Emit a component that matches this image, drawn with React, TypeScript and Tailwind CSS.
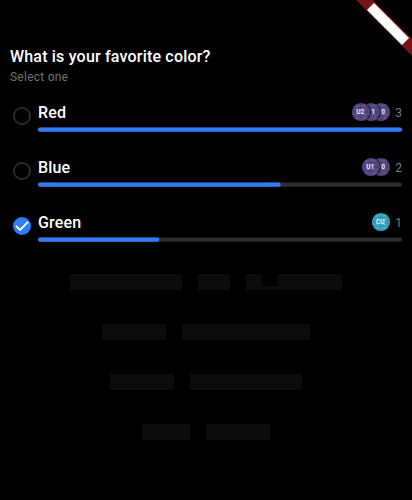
type Voter = { label: string; kind: 'user' | 'current' };
type Option = { name: string; votes: number; checked: boolean; voters: Voter[] };

const OPTIONS: Option[] = [
  {
    name: 'Red', votes: 3, checked: false,
    voters: [{ label: 'U2', kind: 'user' }, { label: '1', kind: 'user' }, { label: '0', kind: 'user' }],
  },
  {
    name: 'Blue', votes: 2, checked: false,
    voters: [{ label: 'U1', kind: 'user' }, { label: '0', kind: 'user' }],
  },
  { name: 'Green', votes: 1, checked: true, voters: [{ label: 'CU', kind: 'current' }] },
];

const WORDS: number[][] = [[7, 2, 6], [4, 8], [4, 7], [3, 4]];

const LAYERS = ['relative z-30', 'relative z-20', 'relative z-10'];

function Avatar({ label, kind, index }: Voter & { index: number }) {
  const user = kind === 'user';
  const base = user ? '#52467f' : '#35a2ba';
  const light = user ? '#786c96' : '#69c7d6';
  const dark = user ? '#3f3474' : '#197d96';
  return (
    <svg viewBox="0 0 20 20" className={`size-5 shrink-0 ${LAYERS[index]}`}>
      <circle cx="10" cy="10" r="9.7" fill="#000" />
      <circle cx="10" cy="10" r="9.1" fill={base} />
      <g fill="none" strokeWidth=".6">
        <path d="M4 4 16 3M2 7h16M1.5 12.5 18 13M4 16h12M6 3v14M13 2l1 15" stroke={light} opacity=".6" />
        <path d="M3 5.5h14M1.5 10h17M3 14.5h14M9.5 1.5v17M3.7 5v10M16.5 5v10" stroke={dark} opacity=".6" />
      </g>
      <text
        x={index === 0 ? 9.3 : 12.2} y="12.2" textAnchor="middle" fill="#efecf5"
        className="font-[Roboto,sans-serif] text-[6.5px] font-bold"
      >
        {label}
      </text>
    </svg>
  );
}

function Check({ checked }: { checked: boolean }) {
  return (
    <svg viewBox="0 0 18 18" className="mt-[11px] size-[18px] shrink-0">
      {checked ? (
        <>
          <circle cx="9" cy="9" r="9" fill="#2f7dfb" />
          <path d="m3 8.9 4 4 8.1-8.1" fill="none" stroke="#fff" strokeWidth="1.8" />
        </>
      ) : (
        <circle cx="9" cy="9" r="8.1" fill="none" stroke="#303030" strokeWidth="1.7" />
      )}
    </svg>
  );
}

function PollOption({ option }: { option: Option }) {
  return (
    <div className="flex h-[55px] pl-[13px] pr-[10px]">
      <Check checked={option.checked} />
      <div className="ml-[7px] flex-1">
        <div className="flex h-[31px] items-start justify-between">
          <span className="mt-[7px] text-[16px] font-medium leading-[20px] tracking-[0.15px] text-white">{option.name}</span>
          <div className="mt-[6px] flex h-5 items-center">
            <div className="flex -space-x-[10px]">
              {option.voters.map((v, i) => <Avatar key={v.label} {...v} index={i} />)}
            </div>
            <span className="ml-1 mt-px text-[12px] leading-5 text-[#7e7e7e]">{option.votes}</span>
          </div>
        </div>
        <svg viewBox="0 0 364 6" className="h-[6px] w-full">
          <rect y=".4" width="364" height="4.3" rx="2" fill="#2d2f2f" />
          <rect y=".4" width={(364 * option.votes) / 3} height="4.3" rx="2" fill="#2f7dfb" />
        </svg>
      </div>
    </div>
  );
}

export default function App() {
  return (
    <div className="relative h-[500px] w-[412px] overflow-hidden bg-black font-[Roboto,sans-serif]">
      <div className="px-[10px] pt-[47px]">
        <h1 className="text-[16px] font-medium leading-[20px] tracking-[0.19px] text-white">What is your favorite color?</h1>
        <p className="mt-[2px] text-[12px] leading-4 tracking-[0.24px] text-[#737373]">Select one</p>
      </div>
      <div className="pt-[11px]">
        {OPTIONS.map((o) => <PollOption key={o.name} option={o} />)}
      </div>
      <div className="mt-[13px] flex flex-col gap-[34px]">
        {WORDS.map((words, row) => (
          <div key={row} className="flex justify-center gap-4">
            {words.map((count, w) => (
              <div key={w} className="flex h-4 items-end">
                {Array.from({ length: count }, (_, i) => (
                  <span
                    key={i}
                    className={row === 0 && w === 2 && i === 1 ? 'h-1 w-4 bg-[#0c0c0e]' : 'h-4 w-4 bg-[#0c0c0e]'}
                  />
                ))}
              </div>
            ))}
          </div>
        ))}
      </div>
      <svg viewBox="0 0 56 56" className="absolute right-0 top-0 size-14">
        <path d="M0 0H17L56 39V56Z" fill="#741516" />
        <path d="m18 3 35 35-7 7-35-35Z" fill="#fff" />
        <path d="m26.7 11.7-7 7m15.8 1.8-7 7m15.7 1.7-7 7" stroke="#f1e8e8" strokeWidth=".5" />
      </svg>
    </div>
  );
}
